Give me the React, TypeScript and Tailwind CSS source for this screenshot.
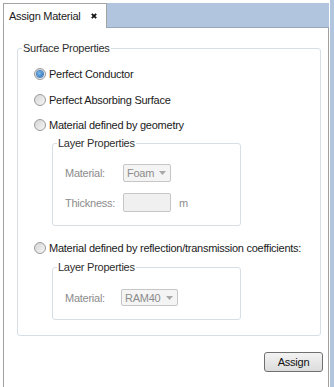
import React from 'react';

const font = { fontFamily: '"Liberation Sans", Arial, sans-serif' };

function Radio({ label, checked = false }: { label: string; checked?: boolean }) {
  return (
    <div className="flex items-center h-[16px]">
      <div className="w-[12px] h-[12px] rounded-full border border-[#9a9a9a] bg-linear-to-br from-[#d4d4d4] to-[#f7f7f7] flex items-center justify-center shrink-0">
        {checked && (
          <div className="w-[6px] h-[6px] rounded-full bg-[radial-gradient(circle_at_40%_40%,#7fc0f0,#1d5ea8)] ring-1 ring-[#4a86c6]" />
        )}
      </div>
      <span className="ml-[3px] text-[#1a1a1a]">{label}</span>
    </div>
  );
}

function Combo({ value, width, height }: { value: string; width: string; height: string }) {
  return (
    <div className={`${width} ${height} border border-[#c6c6c6] rounded-[2px] bg-[#f4f4f4] flex items-center justify-between pl-[3px] pr-[4px] text-[#8c8c8c]`}>
      <span>{value}</span>
      <svg width="7" height="4" viewBox="0 0 7 4">
        <path d="M0 0h7L3.5 4z" fill="#a8a8a8" />
      </svg>
    </div>
  );
}

function Group({ title, className, children }: { title: string; className: string; children: React.ReactNode }) {
  return (
    <fieldset className={`border border-[#d6dfe6] rounded-[3px] p-0 m-0 ${className}`}>
      <legend className="ml-[4px] px-[1px] leading-[14px] text-[#2e2e2e]">{title}</legend>
      {children}
    </fieldset>
  );
}

export default function App() {
  return (
    <div className="w-[334px] h-[387px] bg-white flex overflow-hidden text-[11px] tracking-[-0.25px] leading-[16px]" style={font}>
      {/* Tab strip + panel */}
      <div className="w-[330px] pl-[3px] pt-[3px] flex flex-col">
        <div className="w-[326px] flex flex-col flex-1">
          <div className="flex h-[25px]">
            <div className="w-[104px] border-l border-t border-r border-[#a3a3a3] bg-white flex items-center pl-[5px]">
              <span className="text-[#1a1a1a]">Assign Material</span>
              <svg className="ml-[11px]" width="6" height="6" viewBox="0 0 6 6">
                <path d="M0.8 0.8L5.2 5.2M5.2 0.8L0.8 5.2" stroke="#111" strokeWidth="1.8" />
              </svg>
            </div>
            <div className="flex-1 bg-[#b1c5df] border-b border-[#97a6b9]" />
          </div>

          <div className="flex-1 border-l border-r border-[#a0a0a0] bg-white flex flex-col">
            <Group title="Surface Properties" className="mt-[13px] ml-[13px] w-[304px]">
              <div className="pt-[11px] pl-[16px] pb-[15px] flex flex-col">
                <Radio label="Perfect Conductor" checked />
                <div className="mt-[10px]"><Radio label="Perfect Absorbing Surface" /></div>
                <div className="mt-[9px]"><Radio label="Material defined by geometry" /></div>

                <Group title="Layer Properties" className="mt-[3px] ml-[18px] w-[189px]">
                  <div className="pt-[14px] pl-[12px] pb-[13px] text-[#8c8c8c]">
                    <div className="flex items-center">
                      <span className="w-[58px]">Material:</span>
                      <Combo value="Foam" width="w-[48px]" height="h-[18px]" />
                    </div>
                    <div className="flex items-center mt-[11px]">
                      <span className="w-[58px]">Thickness:</span>
                      <div className="w-[48px] h-[19px] border border-[#c6c6c6] rounded-[2px] bg-[#f0f0f0]" />
                      <span className="ml-[8px]">m</span>
                    </div>
                  </div>
                </Group>

                <div className="mt-[14px]"><Radio label="Material defined by reflection/transmission coefficients:" /></div>

                <Group title="Layer Properties" className="mt-[4px] ml-[18px] w-[189px]">
                  <div className="pt-[15px] pl-[12px] pb-[13px] text-[#8c8c8c]">
                    <div className="flex items-center">
                      <span className="w-[56px]">Material:</span>
                      <Combo value="RAM40" width="w-[57px]" height="h-[17px]" />
                    </div>
                  </div>
                </Group>
              </div>
            </Group>

            <button className="self-end mr-[5px] mt-[16px] w-[59px] h-[20px] rounded-[3px] border border-[#707070] bg-linear-to-b from-[#f3f3f3] to-[#dcdcdc] text-[#111] tracking-[-0.25px]">
              Assign
            </button>
          </div>
        </div>
      </div>
      <div className="w-[4px] bg-[#b1c5df]" />
    </div>
  );
}
